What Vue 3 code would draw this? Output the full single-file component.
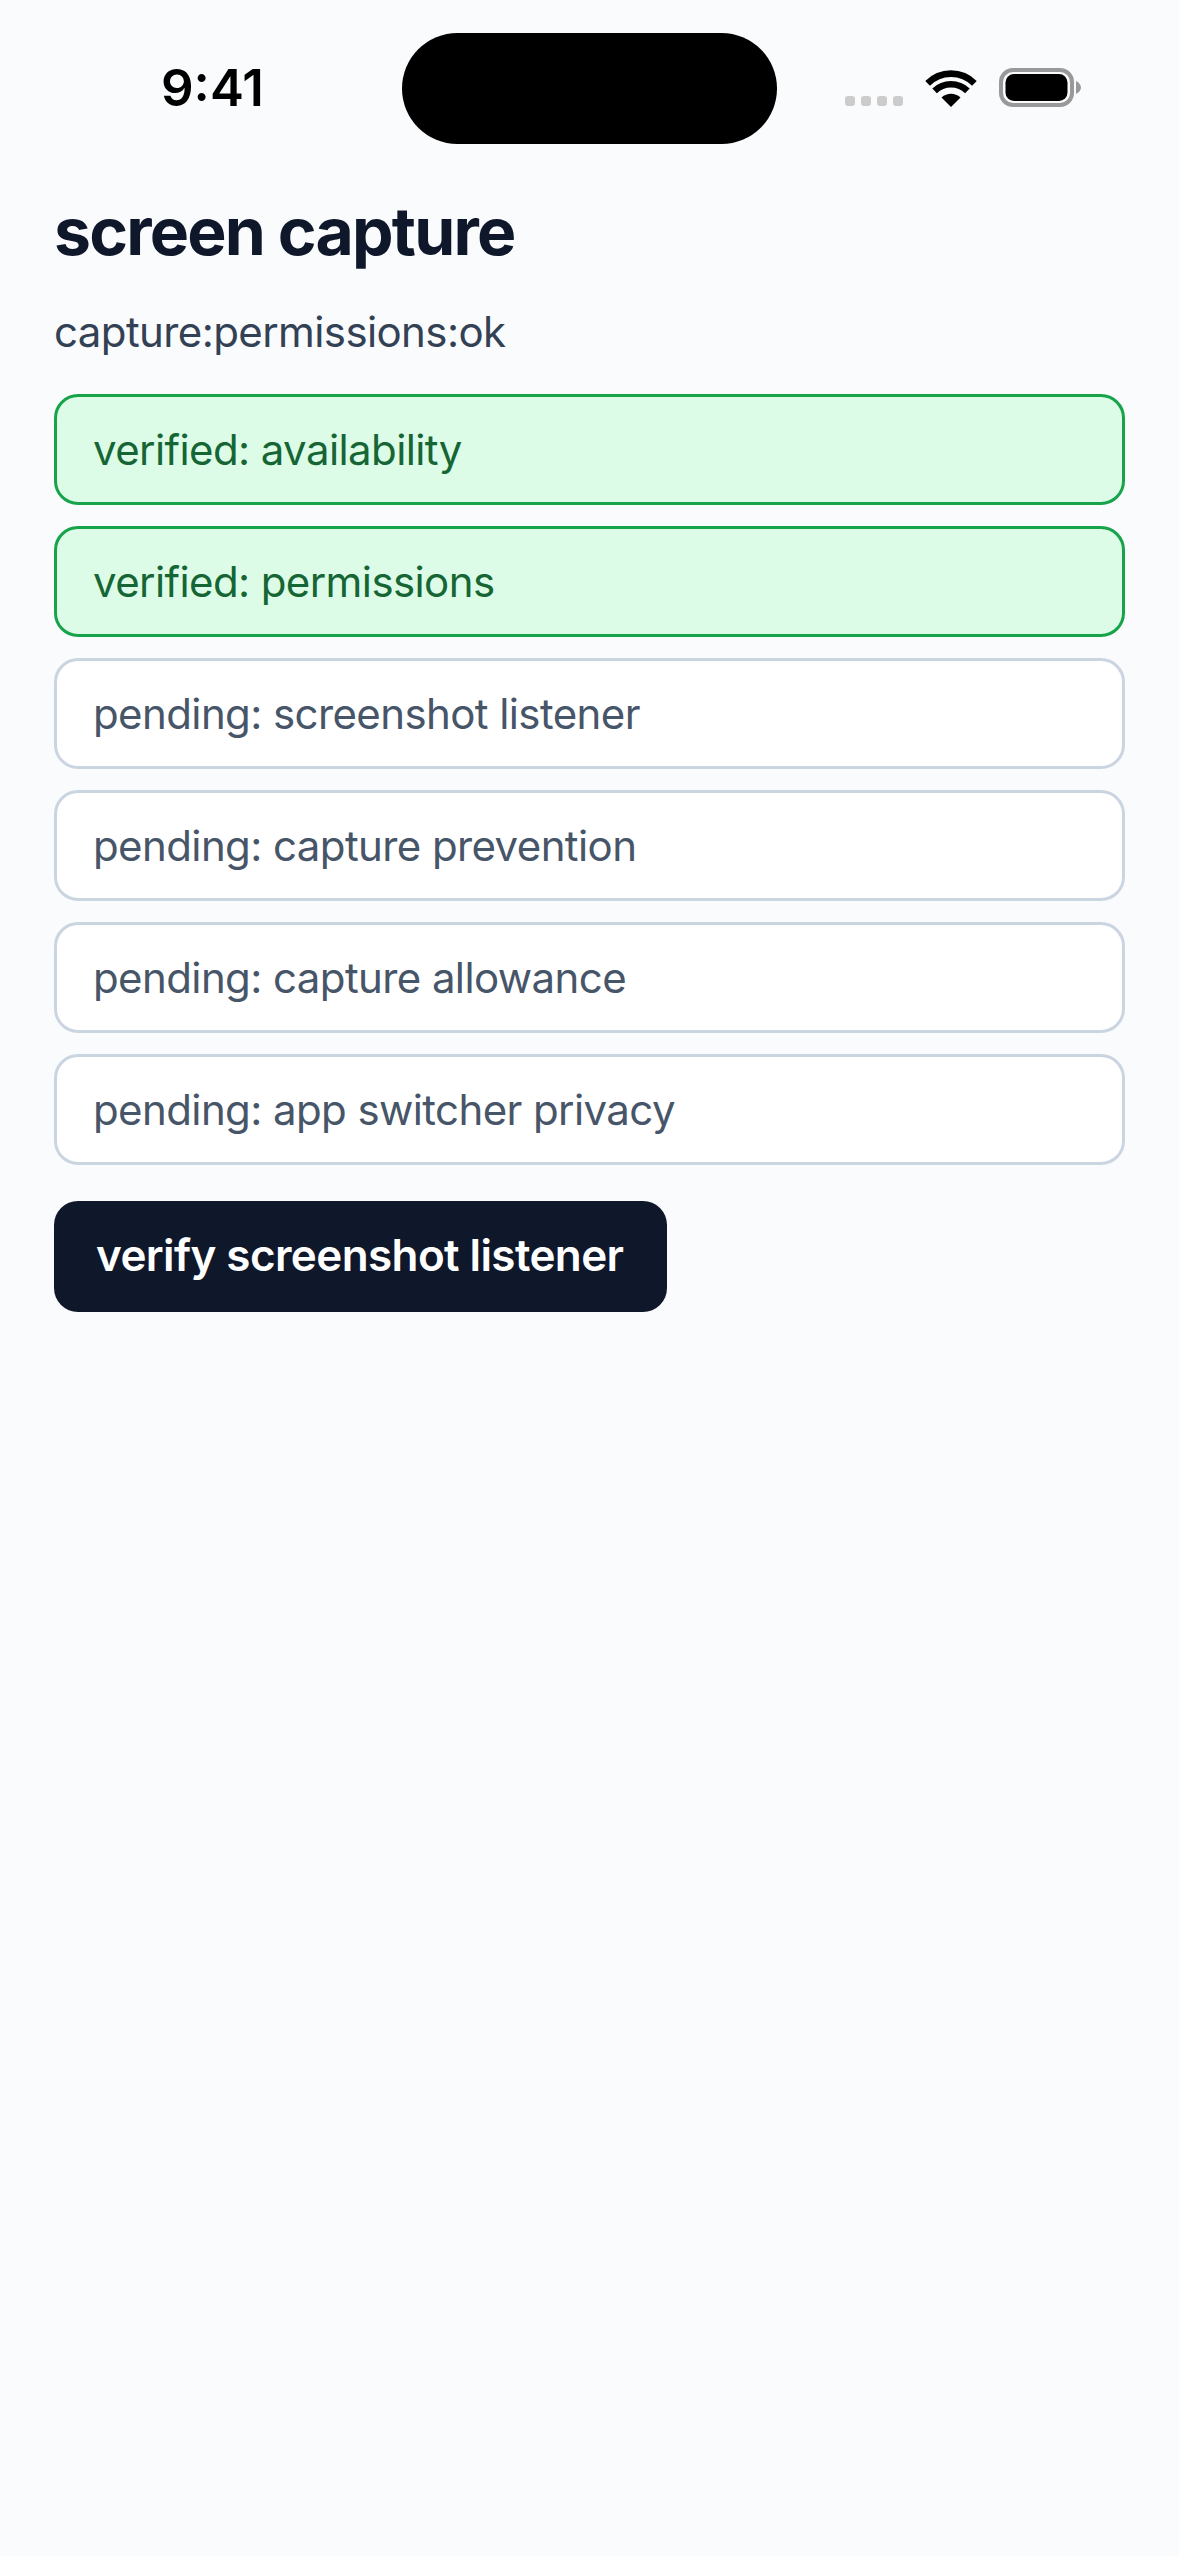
<template>
  <div class="screen">
    <header class="status-bar">
      <span class="time">9:41</span>
      <div class="island"></div>
      <div class="indicators">
        <div class="signal">
          <i v-for="n in 4" :key="n"></i>
        </div>
        <svg class="wifi" width="52" height="38" viewBox="0 0 52 38">
          <path d="M26 38 L16.5 28.6 C22 23.6 30 23.6 35.5 28.6 Z" fill="#000" />
          <path d="M9.6 21.8 C18.6 13 33.4 13 42.4 21.8" fill="none" stroke="#000" stroke-width="6.6" />
          <path d="M2.6 14.4 C15.6 1.4 36.4 1.4 49.4 14.4" fill="none" stroke="#000" stroke-width="6.6" />
        </svg>
        <svg class="battery" width="83" height="39" viewBox="0 0 83 39">
          <rect x="2" y="2" width="71" height="35" rx="12" fill="none" stroke="#999" stroke-width="4" />
          <rect x="6.500" y="6" width="62" height="27" rx="8.500" fill="#000" />
          <path d="M77 13 C80 14.500 82 17 82 19.500 C82 22 80 24.500 77 26 Z" fill="#999" />
        </svg>
      </div>
    </header>

    <main class="content">
      <h1 class="title">screen capture</h1>
      <p class="status-text">capture:permissions:ok</p>

      <ul class="checks">
        <li
          v-for="check in checks"
          :key="check.name"
          class="check"
          :class="{ verified: check.verified }"
        >
          {{ check.verified ? "verified" : "pending" }}: {{ check.name }}
        </li>
      </ul>

      <button class="verify-btn" type="button">verify screenshot listener</button>
    </main>
  </div>
</template>

<script setup>
const checks = [
  { name: "availability", verified: true },
  { name: "permissions", verified: true },
  { name: "screenshot listener", verified: false },
  { name: "capture prevention", verified: false },
  { name: "capture allowance", verified: false },
  { name: "app switcher privacy", verified: false },
];
</script>

<style>
html,
body {
  margin: 0;
  background: #fafbfd;
}
</style>

<style scoped>
.screen {
  min-height: 2556px;
  background: #fafbfd;
  font-family: Inter, "Liberation Sans", sans-serif;
  box-sizing: border-box;
}

.status-bar {
  position: relative;
  height: 195px;
  display: flex;
  align-items: flex-start;
  justify-content: space-between;
}

.time {
  margin: 56px 0 0 161px;
  font-size: 51px;
  line-height: 64px;
  font-weight: 600;
  color: #000;
}

.island {
  position: absolute;
  left: 402px;
  top: 33px;
  width: 375px;
  height: 111px;
  border-radius: 56px;
  background: #000;
}

.indicators {
  display: flex;
  align-items: flex-start;
  margin: 68px 97px 0 0;
}

.signal {
  display: flex;
  gap: 6px;
  margin: 28px 22px 0 0;
}

.signal i {
  width: 10px;
  height: 10px;
  border-radius: 3px;
  background: #ccc;
}

.wifi {
  margin: 1px 22px 0 0;
}

.content {
  padding: 0 54px;
}

.title {
  margin: 0;
  font-size: 66px;
  line-height: 72px;
  font-weight: 700;
  letter-spacing: -1.8px;
  color: #0f172a;
}

.status-text {
  margin: 35px 0 0;
  font-size: 42px;
  line-height: 60px;
  letter-spacing: -0.6px;
  color: #334155;
}

.checks {
  list-style: none;
  margin: 32px 0 0;
  padding: 0;
  display: flex;
  flex-direction: column;
  gap: 21px;
}

.check {
  box-sizing: border-box;
  height: 111px;
  padding: 0 36px;
  display: flex;
  align-items: center;
  border: 3px solid #cbd5e1;
  border-radius: 24px;
  background: #fff;
  font-size: 42px;
  letter-spacing: -0.6px;
  color: #475569;
}

.check.verified {
  border-color: #16a34a;
  background: #dcfce7;
  color: #166534;
}

.verify-btn {
  display: block;
  height: 111px;
  margin-top: 36px;
  padding: 0 44px 3px 42px;
  border: 0;
  border-radius: 24px;
  background: #0f172a;
  font-family: inherit;
  font-size: 44px;
  font-weight: 600;
  letter-spacing: -0.6px;
  color: #fff;
}
</style>
